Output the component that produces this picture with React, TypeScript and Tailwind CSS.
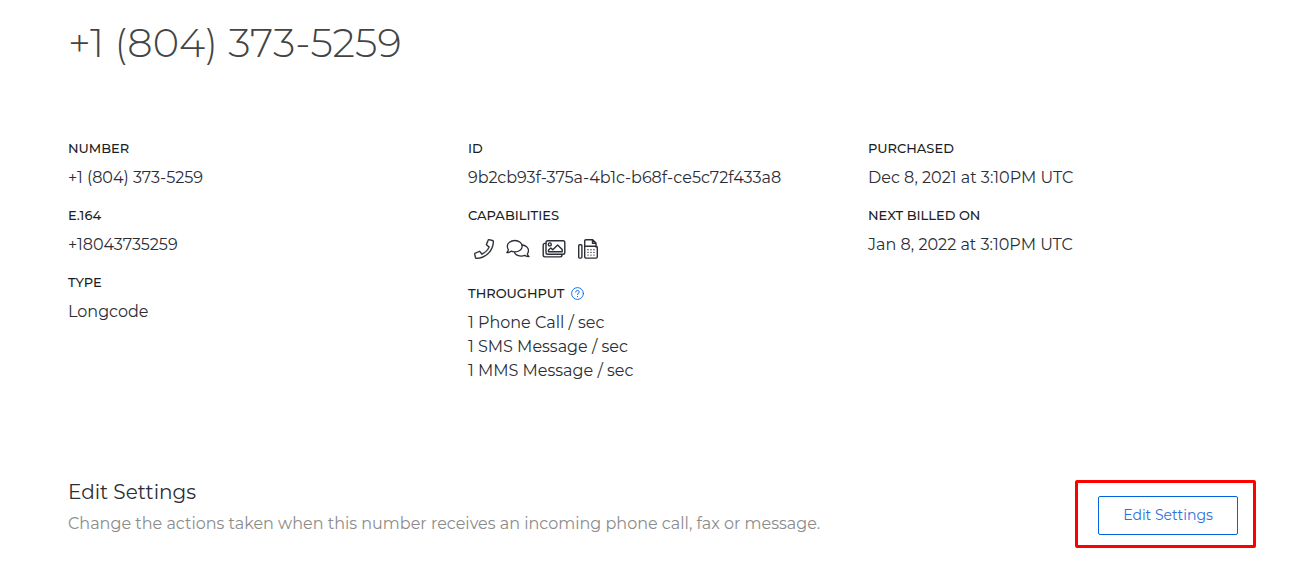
import type { ReactNode } from "react";

function PhoneIcon() {
  return (
    <svg className="h-5 w-5" viewBox="0 0 512 512" fill="currentColor" stroke="currentColor" strokeWidth="4" role="img" aria-label="Voice">
      <path d="M487.8 24.1L387 .8c-14.7-3.4-29.8 4.2-35.8 18.1l-46.5 108.5c-5.5 12.7-1.8 27.7 8.9 36.5l53.9 44.1c-34 69.2-90.3 125.6-159.6 159.6L163.8 313.8c-8.8-10.7-23.8-14.4-36.5-8.9L18.9 351.3C5 357.2-2.6 372.3.8 387L24 487.7C27.3 502 39.9 512 54.5 512 306.7 512 512 307.8 512 54.5c0-14.6-10-27.2-24.2-30.4zM55.1 480l-23-99.6 107.4-46 59.5 72.8c103.6-48.6 159.7-104.9 208.1-208.1l-72.8-59.5 46-107.4 99.6 23C479.7 289.7 289.6 479.8 55.1 480z" />
    </svg>
  );
}

function ChatIcon() {
  return (
    <svg className="h-5 w-6" viewBox="0 0 24 20" fill="none" stroke="currentColor" strokeWidth="1.3" strokeLinecap="round" strokeLinejoin="round" role="img" aria-label="SMS">
      <path d="M8.8 1.5C13 1.5 16.2 4 16.200 7.200S13 12.900 8.800 12.900C7.500 12.900 6.200 12.700 5.100 12.200C4 13.100 2.500 13.600.8 13.600C1.600 12.700 2.200 11.700 2.400 10.600C1.700 9.700 1.300 8.500 1.300 7.200C1.300 4 4.600 1.500 8.800 1.500Z" />
      <path d="M16 6C19.600 6.200 22.500 8.500 22.500 11.500C22.500 12.800 22.100 13.900 21.400 14.800C21.600 15.900 22.200 16.900 23 17.700C21.400 17.700 19.900 17.200 18.800 16.400C17.700 16.900 16.500 17.100 15.200 17.100C12.200 17.100 9.700 15.800 8.500 13.600" />
    </svg>
  );
}

function ImagesIcon() {
  return (
    <svg className="h-5 w-6" viewBox="0 0 24 20" fill="none" stroke="currentColor" strokeWidth="1.4" strokeLinecap="round" strokeLinejoin="round" role="img" aria-label="MMS">
      <rect x="4" y="1.700" width="18.800" height="13.600" rx="1.800" />
      <path d="M3.800 4.400H3A1.800 1.800 0 0 0 1.200 6.200V16.100A1.800 1.800 0 0 0 3 17.900H18.200A1.800 1.800 0 0 0 20 16.100V15.500" />
      <circle cx="7.800" cy="5.400" r="1.500" />
      <path d="M6.500 12.700V11.100L8.800 8.900L10.800 10.800L15.600 6L20.200 10.600V12.700Z" />
    </svg>
  );
}

function FaxIcon() {
  return (
    <svg className="h-5 w-5" viewBox="0 0 20 20" fill="none" stroke="currentColor" strokeWidth="1.4" strokeLinecap="round" strokeLinejoin="round" role="img" aria-label="Fax">
      <rect x=".7" y="5.700" width="3.200" height="13.400" rx="1" />
      <path d="M6.700 8V1.900A1.200 1.200 0 0 1 7.900.7H14.700L18 4V8M14.500.9V4.200H18M7.500 7.300H18A1.300 1.300 0 0 1 19.300 8.600V17.800A1.300 1.300 0 0 1 18 19.100H8A1.300 1.300 0 0 1 6.700 17.800V7.300" />
      <path d="M10 10.700h.01M13 10.700h.01M16 10.700h.01M10 13.400h.01M13 13.400h.01M16 13.400h.01M10 16.100h.01M13 16.100h.01M16 16.100h.01" />
    </svg>
  );
}

function HelpIcon() {
  return (
    <svg className="h-[13px] w-[13px]" viewBox="0 0 13 13" fill="none" stroke="currentColor" strokeLinecap="round" aria-hidden="true">
      <circle cx="6.500" cy="6.500" r="5.900" strokeWidth=".9" />
      <path d="M4.800 5.100C4.800 4 5.500 3.400 6.500 3.400S8.200 4 8.200 5C8.200 6.200 6.500 6.200 6.500 7.500M6.500 9.400V9.500" />
    </svg>
  );
}

function Field({ label, help, children }: { label: string; help?: boolean; children: ReactNode }) {
  return (
    <div className="flex flex-col gap-2">
      <dt className="flex items-center gap-[7px] text-[13px] leading-5 font-medium uppercase">
        {label}
        {help && (
          <button type="button" aria-label="About throughput" className="text-[#0263e0]">
            <HelpIcon />
          </button>
        )}
      </dt>
      <dd className="text-base leading-6 font-normal text-[#2b2e36]">{children}</dd>
    </div>
  );
}

export default function App() {
  return (
    <main className="bg-white pt-4 pr-[23px] pb-8 pl-[68px] font-['Montserrat','Inter',sans-serif] text-[#1c1f26]">
      <h1 className="text-[40px] leading-[54px] font-light text-[#444]">+1 (804) 373-5259</h1>

      <div className="mt-[68px] grid grid-cols-3 items-start">
        <dl className="flex flex-col gap-[15px]">
          <Field label="Number">+1 (804) 373-5259</Field>
          <Field label="E.164">+18043735259</Field>
          <Field label="Type">Longcode</Field>
        </dl>
        <dl className="flex flex-col gap-[15px]">
          <Field label="ID">9b2cb93f-375a-4b1c-b68f-ce5c72f433a8</Field>
          <Field label="Capabilities">
            <span className="flex h-[35px] items-center gap-3 pb-[3px] pl-[6px]">
              <PhoneIcon />
              <ChatIcon />
              <ImagesIcon />
              <FaxIcon />
            </span>
          </Field>
          <Field label="Throughput" help>
            <ul>
              <li>1 Phone Call / sec</li>
              <li>1 SMS Message / sec</li>
              <li>1 MMS Message / sec</li>
            </ul>
          </Field>
        </dl>
        <dl className="flex flex-col gap-[15px]">
          <Field label="Purchased">Dec 8, 2021 at 3:10PM UTC</Field>
          <Field label="Next billed on">Jan 8, 2022 at 3:10PM UTC</Field>
        </dl>
      </div>

      <section className="mt-[97px] flex items-start justify-between pr-3">
        <div>
          <h2 className="text-xl leading-6 font-normal text-[#2b2e36]">Edit Settings</h2>
          <p className="mt-2 text-base leading-6 font-normal text-[#8c8c8c]">
            Change the actions taken when this number receives an incoming phone call, fax or message.
          </p>
        </div>
        <div className="rounded-xs border-3 border-[#ff0000] pt-[13px] pr-[15px] pb-[10px] pl-5">
          <button type="button" className="h-[39px] w-[140px] rounded-xs border border-[#0263e0] pb-0.5 text-sm font-normal text-[#2a6fdc]">
            Edit Settings
          </button>
        </div>
      </section>
    </main>
  );
}
